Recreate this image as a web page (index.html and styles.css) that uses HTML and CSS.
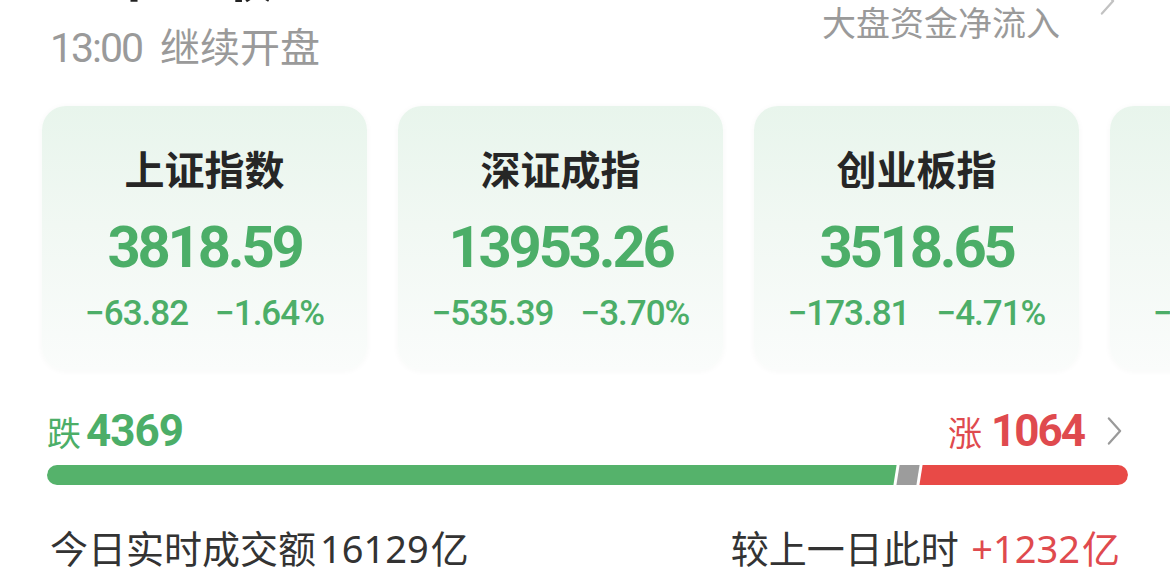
FILE: index.html
```html
<!DOCTYPE html>
<html lang="zh-CN">
<head>
<meta charset="utf-8">
<title>大盘行情</title>
<link rel="stylesheet" href="styles.css">
</head>
<body>
<div class="page">
  <header class="head">
    <div class="status">
      <h1 class="status-title">上午已收盘</h1>
      <div class="status-sub"><span class="status-time">13:00</span><span>继续开盘</span></div>
    </div>
    <a class="flow" href="#">
      <div class="flow-text">
        <div class="flow-value">−326.48亿</div>
        <div class="flow-label">大盘资金净流入</div>
      </div>
      <svg class="flow-arrow" viewBox="0 0 16 30" width="16" height="30"><path d="M2 1.5 L14 15 L2 28.5"/></svg>
    </a>
  </header>

  <div class="cards">
    <div class="card">
      <div class="card-name">上证指数</div>
      <div class="card-price">3818.59</div>
      <div class="card-change"><span>−63.82</span><span>−1.64%</span></div>
    </div>
    <div class="card">
      <div class="card-name">深证成指</div>
      <div class="card-price">13953.26</div>
      <div class="card-change"><span>−535.39</span><span>−3.70%</span></div>
    </div>
    <div class="card">
      <div class="card-name">创业板指</div>
      <div class="card-price">3518.65</div>
      <div class="card-change"><span>−173.81</span><span>−4.71%</span></div>
    </div>
    <div class="card">
      <div class="card-name">科创50</div>
      <div class="card-price">1062.37</div>
      <div class="card-change"><span>−43.58</span><span>−3.94%</span></div>
    </div>
  </div>

  <section class="breadth">
    <div class="breadth-row">
      <div class="count down"><span class="count-label">跌</span><span class="count-num">4369</span></div>
      <div class="count up"><span class="count-label">涨</span><span class="count-num">1064</span>
        <svg class="count-arrow" viewBox="0 0 16 30" width="16" height="30"><path d="M2 1.5 L14 15 L2 28.5"/></svg>
      </div>
    </div>
    <div class="bar">
      <div class="seg seg-down" style="flex-grow:4369"></div>
      <div class="seg seg-flat" style="flex-grow:105"></div>
      <div class="seg seg-up" style="flex-grow:1064"></div>
    </div>
  </section>

  <div class="turnover">
    <div class="turnover-total">今日实时成交额<span class="num">16129</span>亿</div>
    <div class="turnover-diff">较上一日此时 <span class="rise"><span class="num">+1232</span>亿</span></div>
  </div>
</div>
</body>
</html>
```

FILE: styles.css
```css
html, body {
  margin: 0;
  background: #ffffff;
}

body {
  font-family: "Noto Sans CJK SC", "Noto Sans", sans-serif;
  color: #222222;
  overflow: hidden;
}

.page {
  padding: 0 42px;
}

/* header: session status on the left, fund flow link on the right */
.head {
  display: flex;
  justify-content: space-between;
  align-items: flex-start;
  margin-top: -62px;
  padding: 0 13px 0 8px;
}

.status-title {
  margin: 0;
  font-size: 56px;
  line-height: 67px;
  font-weight: 700;
  color: #222222;
}

.status-sub {
  display: flex;
  align-items: baseline;
  gap: 18px;
  margin-top: 16px;
  font-size: 40px;
  line-height: 48px;
  color: #9a9a9a;
}

.status-time {
  font-family: Roboto, "Noto Sans", sans-serif;
  font-size: 41px;
  letter-spacing: -2px;
}

.flow {
  display: flex;
  align-items: center;
  gap: 40px;
  margin-top: 21px;
  text-decoration: none;
}

.flow-text {
  display: flex;
  flex-direction: column;
  align-items: flex-end;
}

.flow-value {
  font-size: 36px;
  line-height: 40px;
  font-weight: 700;
  color: #4cae68;
}

.flow-label {
  margin-top: 3px;
  font-size: 34px;
  line-height: 40px;
  color: #9a9a9a;
}

.flow-arrow,
.count-arrow {
  fill: none;
  stroke: #c2c2c2;
  stroke-width: 2.4;
  stroke-linecap: round;
  stroke-linejoin: round;
}

.flow-arrow {
  width: 15px;
  height: 28px;
}

.cards {
  display: flex;
  gap: 31px;
  margin-top: 34px;
}

.card {
  flex: 0 0 325px;
  height: 264px;
  box-sizing: border-box;
  padding-top: 38px;
  border-radius: 24px;
  background: linear-gradient(180deg, #e8f5ec 0%, #f1f8f3 45%, #fafcfb 100%);
  box-shadow: 0 1px 6px rgba(40, 80, 50, 0.04);
  display: flex;
  flex-direction: column;
  align-items: center;
}

.card-name {
  font-size: 40px;
  line-height: 48px;
  font-weight: 700;
  color: #262626;
}

.card-price {
  margin-top: 20px;
  font-family: Roboto, "Noto Sans", sans-serif;
  font-size: 58px;
  line-height: 70px;
  font-weight: 700;
  letter-spacing: -3.2px;
  color: #4cae68;
}

.card-change {
  display: flex;
  gap: 27px;
  margin-top: 11px;
  font-family: Roboto, "Noto Sans", sans-serif;
  font-size: 35px;
  line-height: 42px;
  font-weight: 500;
  letter-spacing: -1px;
  color: #4cae68;
}

/* advance / decline counts and split bar */
.breadth {
  margin-top: 35px;
  padding-left: 5px;
}

.breadth-row {
  display: flex;
  justify-content: space-between;
  align-items: center;
  height: 52px;
}

.count {
  display: flex;
  align-items: baseline;
  gap: 5px;
}

.count.up {
  gap: 9px;
}

.count-label {
  font-size: 34px;
}

.count-num {
  font-family: Roboto, "Noto Sans", sans-serif;
  font-size: 44px;
  line-height: 52px;
  font-weight: 700;
  letter-spacing: -1px;
}

.up .count-num {
  letter-spacing: -2px;
}

.down { color: #4cae68; }
.up { color: #df4a4e; }

.count-arrow {
  align-self: center;
  width: 15px;
  height: 28px;
  margin-left: 14px;
  margin-right: 6px;
  stroke: #9a9a9a;
}

.bar {
  display: flex;
  gap: 3px;
  height: 20px;
  margin-top: 8px;
  border-radius: 10px;
  overflow: hidden;
}

.seg {
  flex-basis: 0;
  transform: skewX(-9deg);
}

.seg-down { background: #55b26b; }
.seg-flat { background: #9c9c9c; }
.seg-up { background: #e84a47; }

/* turnover line */
.turnover {
  display: flex;
  justify-content: space-between;
  margin-top: 39px;
  padding: 0 8px;
  font-size: 38px;
  line-height: 46px;
  color: #333333;
}

.turnover .num {
  font-family: "Noto Sans", sans-serif;
  margin: 0 2px 0 4px;
}

.rise {
  color: #df4a4e;
}
```
